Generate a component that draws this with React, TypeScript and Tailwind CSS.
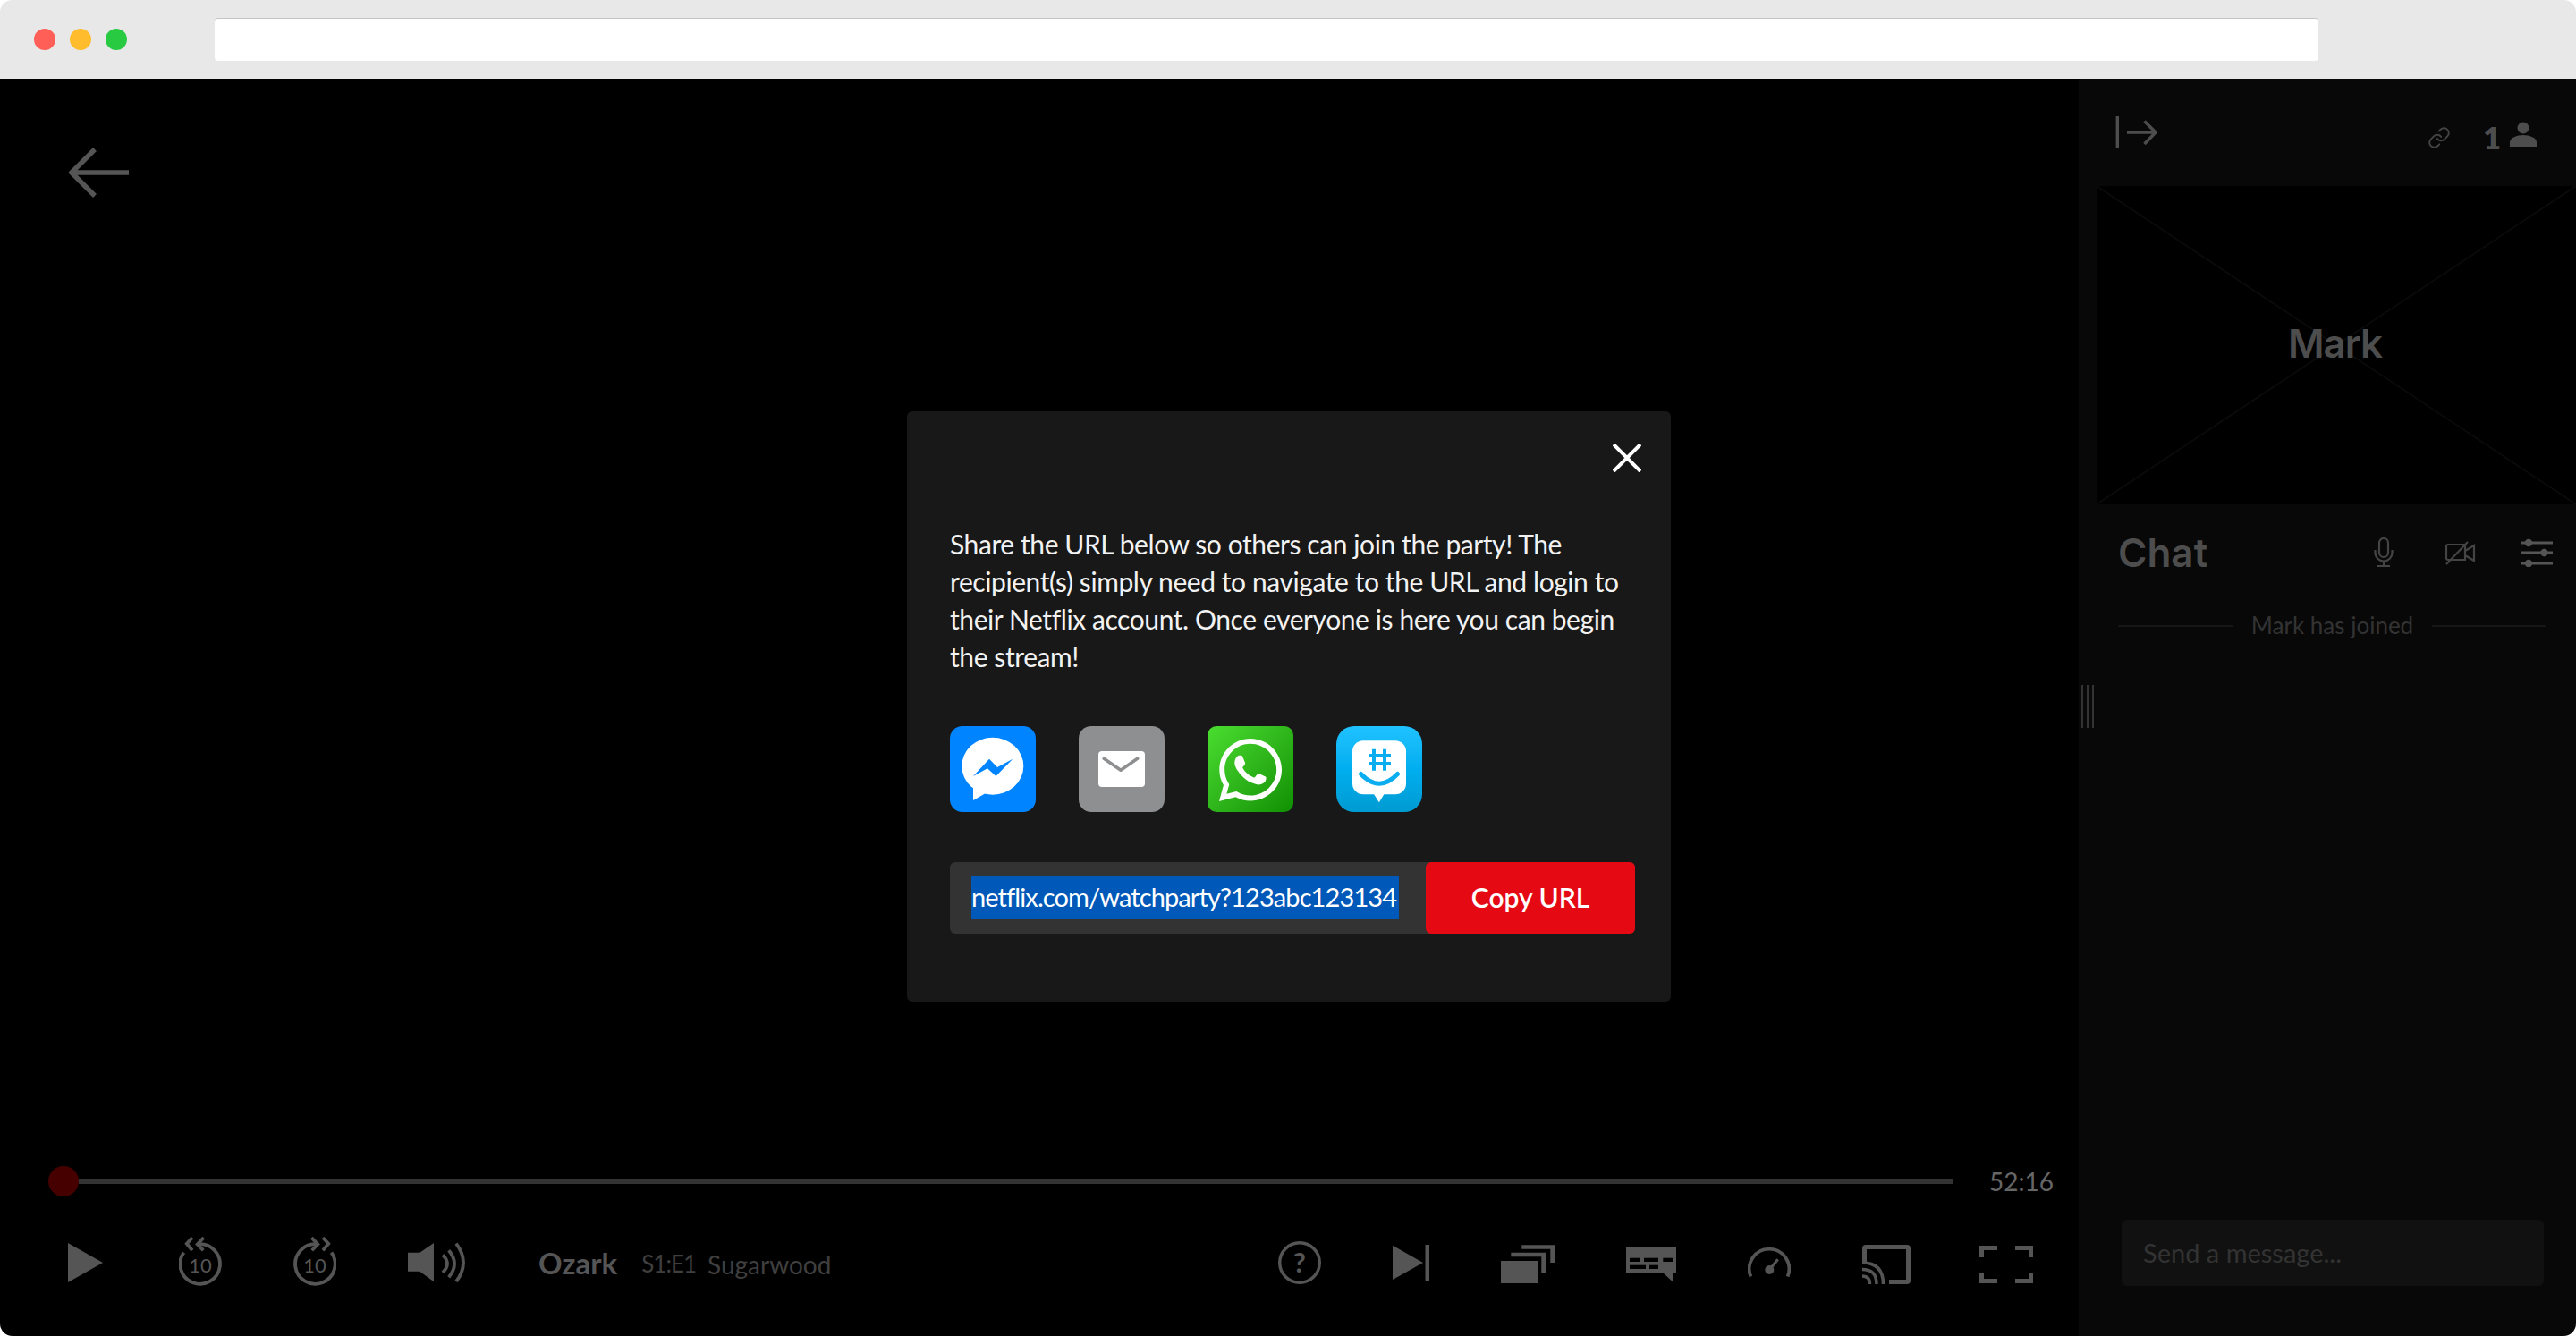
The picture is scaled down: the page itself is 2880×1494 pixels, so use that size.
import React from 'react';
import { Link } from 'lucide-react';
import { FaWhatsapp } from 'react-icons/fa';

const Replay: React.FC<{ forward?: boolean }> = ({ forward }) => (
  <svg width="48" height="56" viewBox="0 0 48 56" fill="none" stroke="#555" strokeWidth="3.8" className="shrink-0">
    <g transform={forward ? 'translate(48 0) scale(-1 1)' : undefined}>
      <path d="M5.5 17.6A22.3 22.3 0 1 0 21 8.4" />
      <path d="M15 1 8.8 7.8 15 15.3M27.7 1 20.7 8.4 27.3 15.3" />
    </g>
    <text x="24" y="39.5" textAnchor="middle" fontSize="22" fill="#555" stroke="none" fontFamily="Lato, sans-serif">10</text>
  </svg>
);

const ControlsLeft = () => (
  <div className="flex items-center">
    <svg width="39" height="56" viewBox="0 0 39 56" fill="#555" className="shrink-0">
      <path d="M0 7 39 29 0 51Z" />
    </svg>
    <div className="ml-[85px]"><Replay /></div>
    <div className="ml-[80px]"><Replay forward /></div>
    <svg width="64" height="56" viewBox="0 0 64 56" fill="none" stroke="#555" strokeWidth="3.8" className="ml-[80px] shrink-0">
      <path d="M0 17.7H13.3L29 7V50.3L13.3 38.7H0Z" fill="#555" stroke="none" />
      <path d="M39 20.3Q49 30 39 40M45.7 15.3Q58.3 30 45.7 45.3M54 7.7Q70 29 54 50" />
    </svg>
    <span className="ml-[82px] mt-[3px] text-[33px] font-bold text-[#555]">Ozark</span>
    <span className="ml-[27px] mt-[5px] text-[26px] tracking-[-1px] text-[#3f3f3f]">S1:E1</span>
    <span className="ml-[13px] mt-[5px] text-[28px] text-[#3f3f3f]">Sugarwood</span>
  </div>
);

const ControlsRight = () => (
  <div className="flex items-center gap-[80px]">
    <svg width="48" height="56" viewBox="0 0 48 56" fill="none" className="shrink-0">
      <circle cx="24" cy="29" r="22.3" stroke="#555" strokeWidth="3.4" />
      <text x="24" y="39.5" textAnchor="middle" fontSize="30" fontWeight="700" fill="#555" fontFamily="Lato, sans-serif">?</text>
    </svg>
    <svg width="41" height="56" viewBox="0 0 41 56" fill="#555" className="shrink-0">
      <path d="M0 9.7 34 29 0 48Z" />
      <rect x="36.5" y="9" width="4.5" height="40" />
    </svg>
    <svg width="60" height="56" viewBox="0 0 60 56" fill="#555" className="shrink-0">
      <rect x="0" y="27" width="42" height="25" />
      <path d="M11.3 17.7H50V40.3H45.3V22.3H11.3Z" />
      <path d="M23.3 9.3H60V29H55.3V13.7H23.3Z" />
    </svg>
    <svg width="56" height="56" viewBox="0 0 56 56" className="shrink-0">
      <path d="M0 11H56V41H52V50.3L42 41H0Z" fill="#555" />
      <g fill="#000">
        <rect x="4" y="23.7" width="11.3" height="4.3" />
        <rect x="20" y="23.7" width="16" height="4.3" />
        <rect x="41.3" y="23.7" width="10.7" height="4.3" />
        <rect x="4" y="31.7" width="18" height="4.3" />
        <rect x="26" y="31.7" width="10" height="4.3" />
      </g>
    </svg>
    <svg width="48" height="56" viewBox="0 0 48 56" fill="none" stroke="#555" className="shrink-0">
      <path d="M3.4 44.5A22.3 22.3 0 1 1 44.6 44.5" strokeWidth="3.8" />
      <circle cx="24.3" cy="37" r="5" fill="#555" stroke="none" />
      <path d="M24.3 37 33.7 25.3" strokeWidth="3.2" />
    </svg>
    <svg width="54" height="56" viewBox="0 0 54 56" fill="none" stroke="#555" className="shrink-0">
      <path d="M2.5 30V13Q2.5 11.5 4 11.5H50Q51.5 11.5 51.5 13V49Q51.5 50.5 50 50.5H30" strokeWidth="5" />
      <path d="M0 44Q8.5 44 8.5 53M0 36.5Q16 36.5 16 53M0 29Q23.5 29 23.5 53" strokeWidth="3.5" />
    </svg>
    <svg width="60" height="56" viewBox="0 0 60 56" fill="none" stroke="#555" strokeWidth="5" className="ml-[-3px] shrink-0">
      <path d="M2.5 23V12.5H20M40 12.5H57.5V23M2.5 40V49.5H20M40 49.5H57.5V40" />
    </svg>
  </div>
);

const ShareIcons = () => (
  <div className="mt-[57px] flex gap-[48px]">
    <div className="h-[96px] w-[96px] overflow-hidden rounded-[14px] bg-[#0084ff]">
      <svg width="96" height="96" viewBox="0 0 96 96">
        <ellipse cx="47.8" cy="44.7" rx="34.5" ry="32" fill="#fff" />
        <path d="M26 66V83L40 75Z" fill="#fff" />
        <path d="M26 56 44 36.7 53 46 70.3 36.7 51.4 56 42 47.3Z" fill="#0084ff" />
      </svg>
    </div>
    <div className="h-[96px] w-[96px] overflow-hidden rounded-[14px] bg-[#8e8f91]">
      <svg width="96" height="96" viewBox="0 0 96 96" fill="none">
        <rect x="22" y="28" width="52" height="40" rx="4" fill="#fff" />
        <path d="M28.2 36.3 47 49.3 65.7 36.3" stroke="#8e8f91" strokeWidth="3.5" strokeLinecap="round" strokeLinejoin="round" />
      </svg>
    </div>
    <div className="flex h-[96px] w-[96px] items-center justify-center rounded-[10px] bg-gradient-to-br from-[#4ade30] to-[#0f9002] pt-[2px] text-white">
      <FaWhatsapp size={80} />
    </div>
    <div className="h-[96px] w-[96px] overflow-hidden rounded-[20px] bg-gradient-to-b from-[#1fc2ff] via-[#00aeef] to-[#009bd2]">
      <svg width="96" height="96" viewBox="0 0 96 96" fill="none">
        <rect x="18" y="16.3" width="60" height="60" rx="12" fill="#fff" />
        <path d="M42 76 47.8 85.3 53.5 76Z" fill="#fff" />
        <path d="M42 25.7V49.7M54 25.7V49.7M36.7 33H61M36.7 42H61" stroke="#0aaef0" strokeWidth="4" />
        <path d="M27.5 53.5Q48 75 68.5 53.5" stroke="#0aaef0" strokeWidth="5" strokeLinecap="round" />
      </svg>
    </div>
  </div>
);

const ShareModal = () => (
  <div className="ml-[1014px] mt-[239px] h-[660px] w-[854px] rounded-[6px] bg-[#181818] pl-[48px] pr-[40px] pt-[36px]">
    <div className="flex justify-end">
      <svg width="32" height="32" viewBox="0 0 32 32" stroke="#fff" strokeWidth="4" className="mr-[-7px]">
        <path d="M1 1 31 31M31 1 1 31" />
      </svg>
    </div>
    <p className="mt-[59px] whitespace-nowrap text-[30px] leading-[42px] tracking-[-0.42px] text-[#f2f2f2]">
      Share the URL below so others can join the party! The
      <br />
      recipient(s) simply need to navigate to the URL and login to
      <br />
      their Netflix account. Once everyone is here you can begin
      <br />
      the stream!
    </p>
    <ShareIcons />
    <div className="mt-[56px] flex h-[80px] items-center rounded-[6px] bg-[#333]">
      <div className="ml-[24px] flex h-[48px] w-[478px] shrink-0 items-center whitespace-nowrap bg-[#0058b8] pb-[2px] text-[29px] tracking-[-0.9px] text-white">
        netflix.com/watchparty?123abc123134
      </div>
      <button className="ml-auto h-[80px] w-[234px] rounded-[6px] bg-[#e50914] pb-[2px] text-[30px] font-semibold text-white">
        Copy URL
      </button>
    </div>
  </div>
);

const SidePanel = () => (
  <aside className="relative flex w-[556px] shrink-0 flex-col bg-[#080808]">
    {/* drag handle */}
    <div className="absolute left-[3px] top-[678px] flex h-[48px] gap-[4px]">
      <div className="w-[2px] bg-[#333]" />
      <div className="w-[2px] bg-[#333]" />
      <div className="w-[2px] bg-[#333]" />
    </div>

    <div className="flex h-[120px] shrink-0 items-start pl-[41px] pr-[44px] pt-[42px] text-[#4d4d4d]">
      <svg width="46" height="36" viewBox="0 0 46 36" fill="none" stroke="#4d4d4d" strokeWidth="3.4" className="shrink-0">
        <path d="M2.3 0V36M13 18H44M32.5 5.5 45 18 32.5 31" />
      </svg>
      <Link size={26} strokeWidth={1.8} color="#444" className="ml-auto mt-[11px]" />
      <span className="ml-[36px] mt-[4px] text-[34px] font-extrabold leading-[40px] text-[#4d4d4d]">1</span>
      <svg width="30" height="30" viewBox="0 0 30 30" fill="#4d4d4d" className="ml-[10px] mt-[6px] shrink-0">
        <circle cx="15" cy="7" r="6.5" />
        <path d="M0 28V23C0 18 8 15 15 15S30 18 30 23V28Z" />
      </svg>
    </div>

    <div className="relative ml-[20px] flex h-[356px] shrink-0 items-center justify-center bg-black">
      <svg className="absolute inset-0 h-full w-full" viewBox="0 0 536 356" preserveAspectRatio="none" stroke="#0c0c0c" strokeWidth="1.5">
        <path d="M0 0 536 356M536 0 0 356" />
      </svg>
      <span className="relative mr-[3px] mt-[-5px] text-[44px] font-semibold tracking-[-1px] text-[#4d4d4d]" style={{ fontFamily: 'Inter, sans-serif' }}>Mark</span>
    </div>

    <div className="mt-[22px] flex h-[64px] shrink-0 items-center pl-[44px] pr-[26px]">
      <span className="text-[44px] font-semibold text-[#4d4d4d]" style={{ fontFamily: 'Inter, sans-serif' }}>Chat</span>
      <svg width="22" height="34" viewBox="0 0 22 34" fill="none" stroke="#444" strokeWidth="2.2" className="ml-auto shrink-0">
        <rect x="6" y="1" width="10" height="21" rx="5" />
        <path d="M1.5 14V17A9.5 9.5 0 0 0 20.5 17V14M11 27V32M4 32H18" />
      </svg>
      <svg width="34" height="28" viewBox="0 0 34 28" fill="none" stroke="#444" strokeWidth="2.2" className="ml-[58px] shrink-0">
        <path d="M22 5H3Q1 5 1 7V20Q1 22 3 22H22V5ZM22 12 32 6V23L22 17" />
        <path d="M1 27 25 2" />
      </svg>
      <svg width="36" height="32" viewBox="0 0 36 32" fill="#555" stroke="#555" strokeWidth="2.8" className="ml-[50px] shrink-0">
        <path d="M0 5H36M0 16H36M0 28H36" />
        <circle cx="9" cy="5" r="2.8" />
        <circle cx="26.5" cy="16" r="2.8" />
        <circle cx="9" cy="28" r="2.8" />
      </svg>
    </div>

    <div className="mt-[30px] flex items-center pl-[44px] pr-[33px]">
      <div className="h-[2px] flex-1 bg-[#161616]" />
      <span className="mx-[21px] text-[26px] text-[#333]">Mark has joined</span>
      <div className="h-[2px] flex-1 bg-[#161616]" />
    </div>

    <div className="mb-[56px] ml-[48px] mr-[36px] mt-auto flex h-[74px] items-center rounded-[6px] bg-[#111] pl-[24px] text-[29px] text-[#333]">
      Send a message...
    </div>
  </aside>
);

export default function App() {
  return (
    <div className="h-[1494px] w-[2880px] overflow-hidden bg-white" style={{ fontFamily: 'Lato, sans-serif' }}>
      <div className="flex h-full flex-col overflow-hidden rounded-[14px]">
        {/* browser chrome */}
        <div className="flex h-[88px] shrink-0 items-center bg-[#e8e8e8] pl-[38px]">
          <div className="h-[24px] w-[24px] rounded-full bg-[#ff5f57]" />
          <div className="ml-[16px] h-[24px] w-[24px] rounded-full bg-[#ffbd2e]" />
          <div className="ml-[16px] h-[24px] w-[24px] rounded-full bg-[#28ca42]" />
          <div className="ml-[98px] h-[48px] w-[2352px] rounded-[4px] border-t border-[#c4c4c4] bg-white" />
        </div>

        <div className="flex min-h-0 flex-1">
          <main className="flex w-[2324px] shrink-0 flex-col bg-black">
            <svg width="68" height="56" viewBox="0 0 68 56" fill="none" stroke="#555" strokeWidth="5.5" className="ml-[77px] mt-[77px] shrink-0">
              <path d="M67 28H3M29 2 3 28 29 54" />
            </svg>
            <ShareModal />

            <div className="mt-auto flex h-[34px] items-center pl-[54px]">
              <div className="h-[34px] w-[34px] shrink-0 rounded-full bg-[#470000]" />
              <div className="h-[6px] w-[2096px] shrink-0 bg-[#333]" />
              <span className="ml-[40px] text-[28px] text-[#666]">52:16</span>
            </div>
            <div className="mb-[55px] mt-[45px] flex h-[56px] items-center justify-between pl-[76px] pr-[51px]">
              <ControlsLeft />
              <ControlsRight />
            </div>
          </main>
          <SidePanel />
        </div>
      </div>
    </div>
  );
}
